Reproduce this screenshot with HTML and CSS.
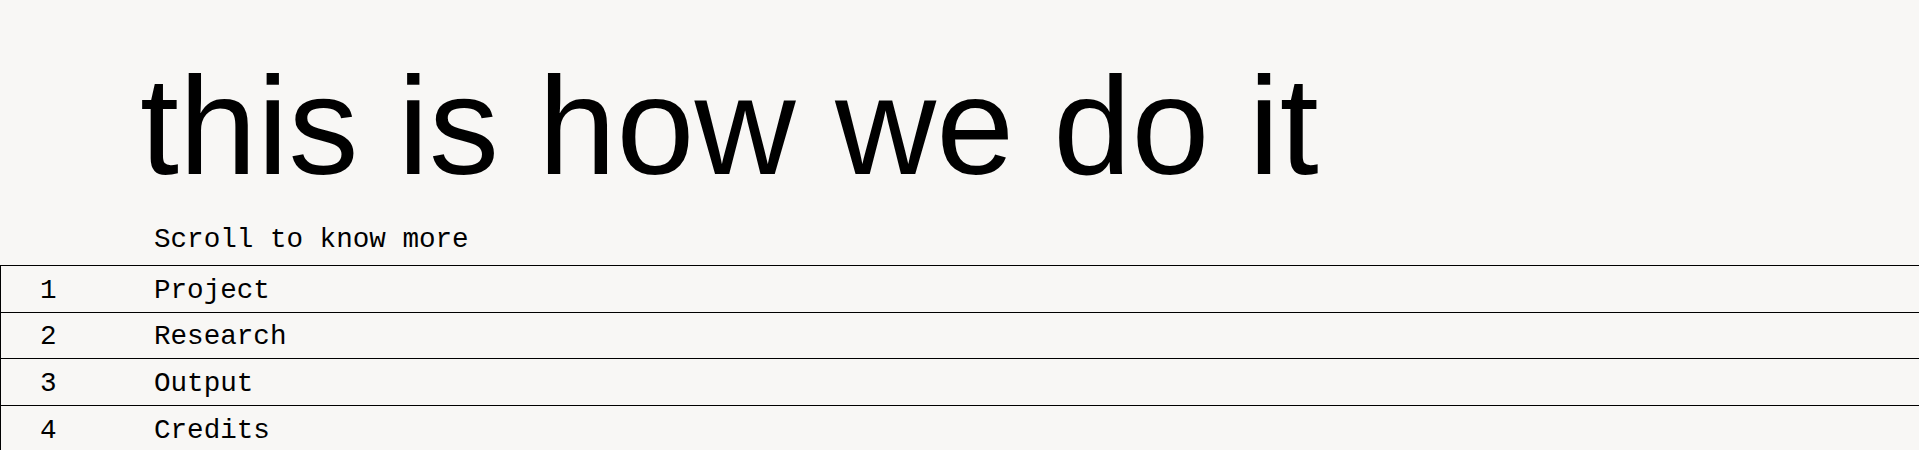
FILE: index.html
```html
<!DOCTYPE html>
<html lang="en">
<head>
<meta charset="utf-8">
<title>this is how we do it</title>
<link rel="stylesheet" href="styles.css">
</head>
<body>
<main class="intro">
  <h1 class="title">this is how we do it</h1>
  <p class="hint">Scroll to know more</p>
  <ol class="chapters">
    <li class="chapter"><span class="num">1</span><span class="name">Project</span></li>
    <li class="chapter"><span class="num">2</span><span class="name">Research</span></li>
    <li class="chapter"><span class="num">3</span><span class="name">Output</span></li>
    <li class="chapter"><span class="num">4</span><span class="name">Credits</span></li>
  </ol>
</main>
</body>
</html>
```
FILE: styles.css
```css
html, body {
  margin: 0;
  padding: 0;
  background: #f8f7f5;
  color: #000;
}

.intro {
  overflow: hidden;
}

.title {
  margin: 0;
  padding: 56px 0 0 140px;
  font-family: "Liberation Sans", Arial, sans-serif;
  font-weight: 400;
  font-size: 140px;
  line-height: 140px;
  letter-spacing: 0.2px;
}

.hint {
  margin: 29.5px 0 11.5px;
  padding-left: 154px;
  font-family: "Liberation Mono", monospace;
  font-size: 27.6px;
  line-height: 28px;
}

.chapters {
  list-style: none;
  margin: 0;
  padding: 0;
}

.chapter {
  display: grid;
  grid-template-columns: 153px 1fr;
  align-items: center;
  box-sizing: border-box;
  height: 46.67px;
  padding-top: 4px;
  border-top: 1px solid #000;
  border-left: 1px solid #000;
  font-family: "Liberation Mono", monospace;
  font-size: 27.6px;
  line-height: 28px;
}

.num {
  padding-left: 39px;
}
```
